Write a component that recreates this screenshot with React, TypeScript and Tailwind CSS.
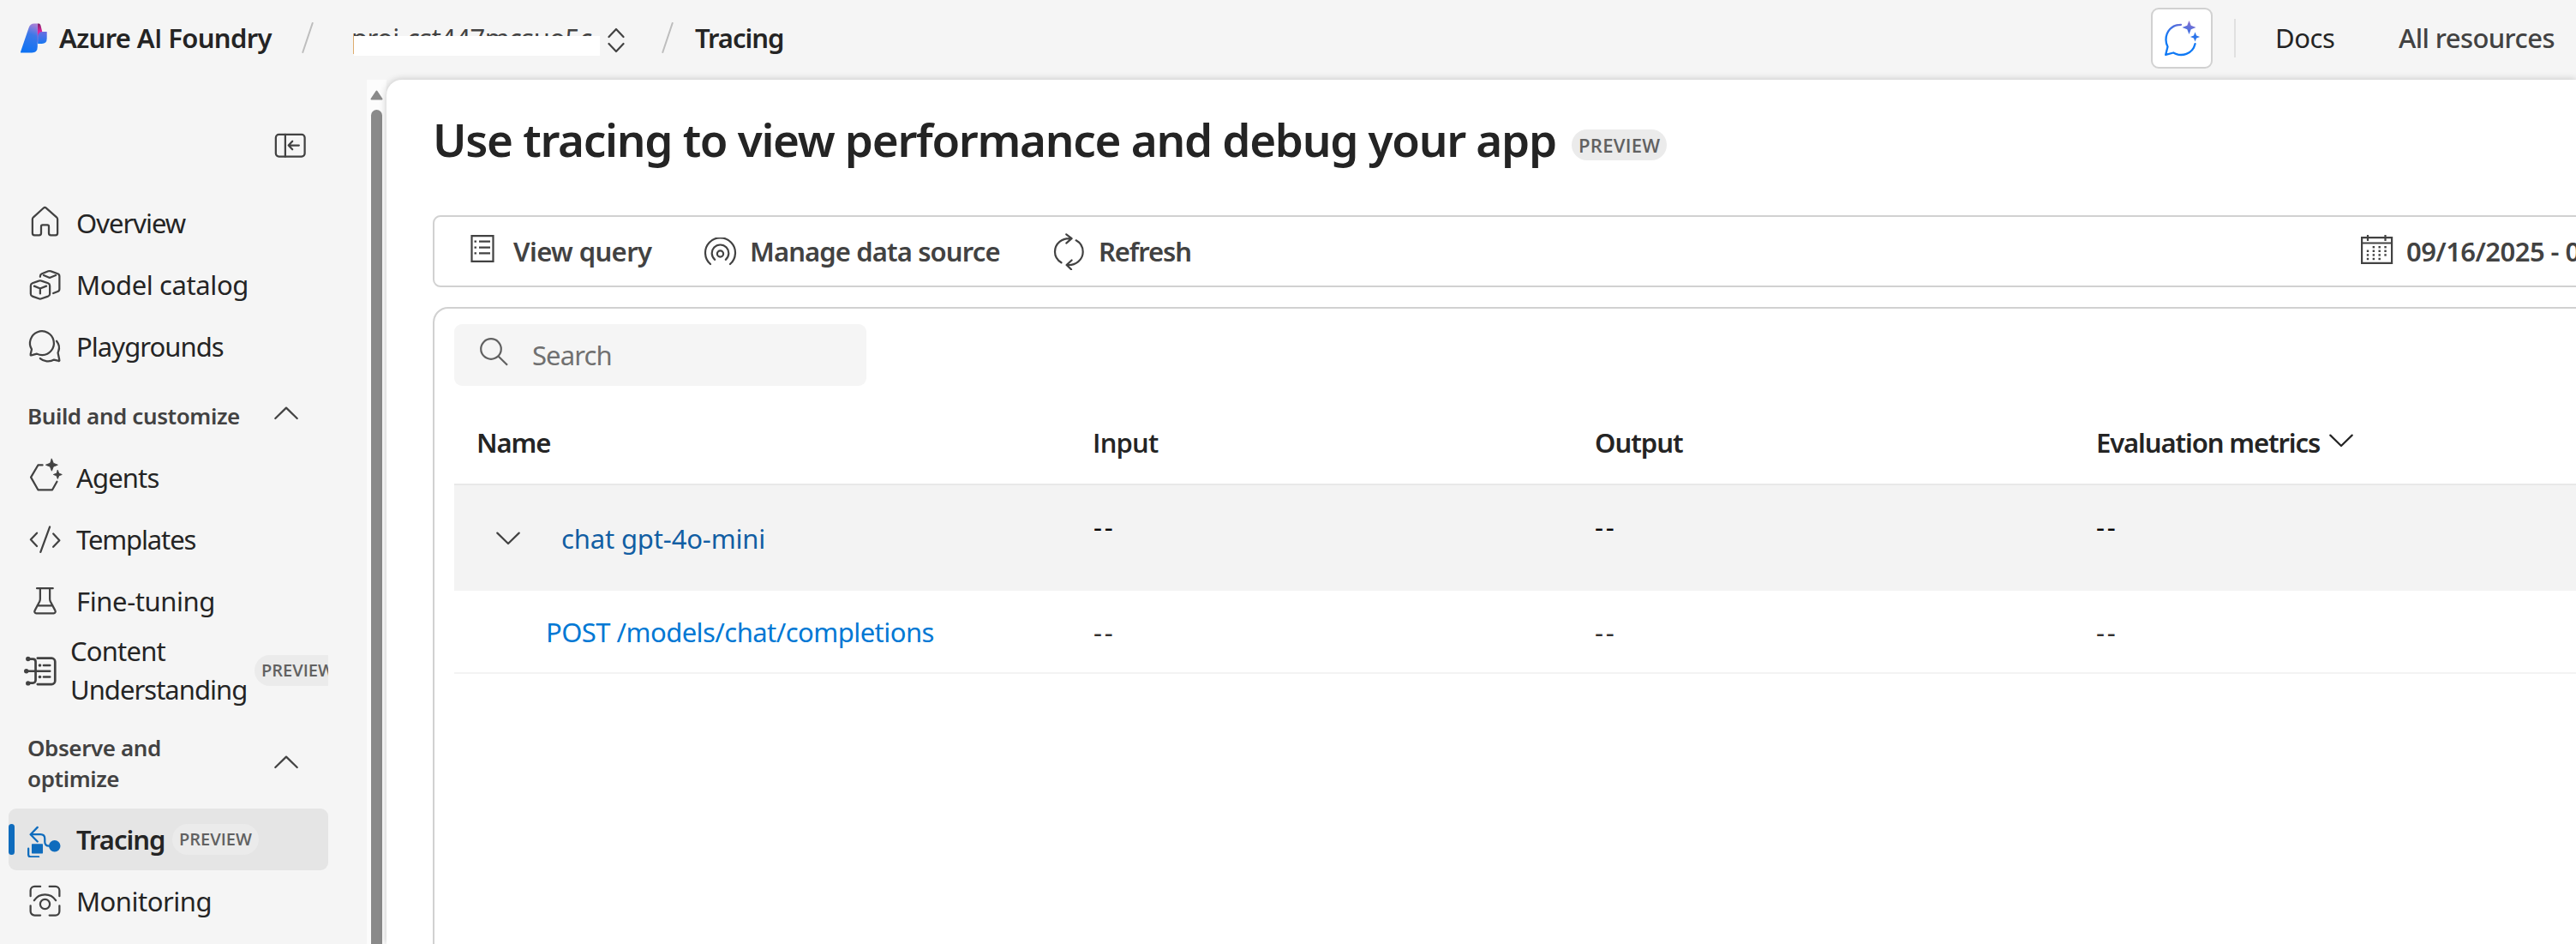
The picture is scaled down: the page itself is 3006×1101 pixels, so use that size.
import type { ReactNode } from "react";

const star = (cx: number, cy: number, r: number) => {
  const k = r * 0.28;
  return `M${cx} ${cy - r}L${cx + k} ${cy - k}L${cx + r} ${cy}L${cx + k} ${cy + k}L${cx} ${cy + r}L${cx - k} ${cy + k}L${cx - r} ${cy}L${cx - k} ${cy - k}Z`;
};

function Icon({ children }: { children: ReactNode }) {
  return (
    <svg viewBox="0 0 20 20" className="size-[45px] shrink-0" fill="none" stroke="currentColor" strokeWidth={1} strokeLinecap="round" strokeLinejoin="round">
      {children}
    </svg>
  );
}

const icons = {
  collapse: <><rect x="2.6" y="4.4" width="15" height="11.4" rx="1.6" /><path d="M7.5 4.4v11.4M14.6 10H9.4M11.2 7.9 9.2 10l2 2.1" /></>,
  home: <path d="M3.5 8.8c0-.4.2-.8.5-1.1l5.3-4.8a1 1 0 0 1 1.3 0L16 7.7c.3.3.5.7.5 1.1V16a1 1 0 0 1-1 1H13a1 1 0 0 1-1-1v-3.5a.75.75 0 0 0-.75-.75h-2.5a.75.75 0 0 0-.75.75V16a1 1 0 0 1-1 1H4.5a1 1 0 0 1-1-1z" />,
  cubes: <><path d="M2.6 11.2c0-.6.4-1.1.9-1.3l3.3-1.2c.5-.2.9-.2 1.4 0l3.4 1.2c.5.2.9.7.9 1.3v4.2c0 .6-.4 1.1-.9 1.3l-3.4 1.2c-.5.2-.9.2-1.4 0l-3.3-1.2a1.4 1.4 0 0 1-.9-1.3zM4.4 11.4l3.1 1.3 3.2-1.3M7.5 12.7v2.6" /><path d="M7.5 6.6v-.3c0-.6.4-1.1.9-1.3l3.3-1.3c.5-.2.9-.2 1.4 0L16.6 5c.6.2.9.7.9 1.3v6.6c0 .6-.3 1.1-.9 1.3l-2.3.9M9.3 5.8l3.1 1.3 3.2-1.3" /></>,
  chat: <><path d="M3.1 12.2A6.2 6.2 0 1 1 8.6 15.2c-1.1 0-1.9-.2-2.8-.7l-2.9.8c-.3.1-.5-.2-.4-.5z" /><path d="M16 7.9c1.1 1.4 1.7 3.4 1 5.2l-.3.9.8 3.8c.1.3-.2.5-.4.4l-2.4-.6c-2.4 1.3-5.3.9-7.2-.7" /></>,
  agents: <><path d="M8.7 4.2H6.4L2.7 10.5l3.7 6.5h7.4l2.4-4.2" /><path d={star(13.5, 4.1, 3.1)} fill="currentColor" strokeWidth={0.4} /><path d={star(16.6, 9.1, 2.2)} fill="currentColor" strokeWidth={0.4} /></>,
  code: <path d="M12.5 4.2 7.7 17.3M5.8 7.4l-3.2 3.4 3.2 3.4M14.3 7.8l3.2 3.4-3.2 3.4" />,
  flask: <path d="M5.8 4.1h8.3M7.5 4.2v5.4c0 .5-.1.9-.3 1.3l-2.5 4.7c-.4.7.1 1.4.8 1.4h9c.7 0 1.2-.7.8-1.4l-2.5-4.7c-.2-.4-.3-.8-.3-1.3V4.2M6 13h8" />,
  content: <><g strokeWidth={1.2}><path d="M3.9 3.8h2.5c.8 0 1.4.6 1.4 1.4v9.6c0 .8-.6 1.5-1.4 1.5H3.9M3 10.1h12.2M8.8 3.4h7.3c1 0 1.8.8 1.8 1.8v9.9c0 1-.8 1.8-1.8 1.8H8.8M12 7.1h3.2M12 13.1h3.2" /></g><g fill="currentColor" strokeWidth={0}><circle cx="3.9" cy="3.8" r="1.2" /><circle cx="3" cy="10.1" r="1.2" /><circle cx="3.9" cy="16.4" r="1.2" /><circle cx="10" cy="7.1" r=".8" /><circle cx="10" cy="13.1" r=".8" /></g></>,
  tracing: <><path d="M6.1 4.4 2.5 8.1l3.6 3.7M2.7 8.1h5c1.500 0 2.200.9 2.200 2.200v1.600c0 1.300.7 2.200 2.200 2.200h1M1.400 15.400v3.200c0 .7.4 1.100 1.100 1.100h4.200" /><rect x="3.1" y="13" width="5.8" height="5" rx=".3" fill="currentColor" strokeWidth={0} /><circle cx="15" cy="14.1" r="3" fill="currentColor" strokeWidth={0} /></>,
  monitor: <><path d="M2.5 8.1V5.200c0-1.200.9-2.100 2.100-2.100h3M12.300 3.100h3.100c1.200 0 2.100.9 2.100 2.100v2.900M17.500 13v2.900c0 1.200-.9 2.100-2.100 2.100h-3.100M7.600 18h-3c-1.200 0-2.100-.9-2.100-2.100V13M4.400 10.300c2.600-4.100 8.600-4.100 11.200 0" /><circle cx="10" cy="12.2" r="2.5" /></>,
};

function Chevron({ up = false, className = "" }: { up?: boolean; className?: string }) {
  return (
    <svg viewBox="0 0 28 16" className={`h-[16px] w-[28px] shrink-0 ${className}`} fill="none" stroke="currentColor" strokeWidth={2.2} strokeLinecap="round" strokeLinejoin="round">
      <path d={up ? "M1.3 14 14 1.6 26.7 14" : "M1.3 1.6 14 14 26.7 1.6"} />
    </svg>
  );
}

function Slash() {
  return (
    <svg viewBox="0 0 14 36" className="h-[36px] w-[14px] shrink-0" fill="none" stroke="#bdbdbd" strokeWidth={2} strokeLinecap="round">
      <path d="M12.7 1 1.3 35" />
    </svg>
  );
}

function Badge({ className = "" }: { className?: string }) {
  return (
    <span className={`flex h-[36px] shrink-0 items-center rounded-full bg-[#ebebeb] font-['Open_Sans'] font-semibold text-[#616161] ${className}`}>PREVIEW</span>
  );
}

function NavItem({ icon, label, tracking }: { icon: ReactNode; label: string; tracking: string }) {
  return (
    <a className="ml-[10px] flex h-[72px] w-[373px] items-center pl-[20px]">
      <span className="mb-[4px] mr-[14px] text-[#424242]"><Icon>{icon}</Icon></span>
      <span className={`whitespace-nowrap ${tracking}`}>{label}</span>
    </a>
  );
}

function Sidebar() {
  return (
    <aside className="flex h-[1008px] w-[428px] shrink-0 flex-col overflow-hidden">
      <div className="ml-[316px] mt-[54px] text-[#424242]"><Icon>{icons.collapse}</Icon></div>
      <nav className="mt-[32px] flex flex-col">
        <NavItem icon={icons.home} label="Overview" tracking="tracking-[-1px]" />
        <NavItem icon={icons.cubes} label="Model catalog" tracking="tracking-[-0.4px]" />
        <NavItem icon={icons.chat} label="Playgrounds" tracking="tracking-[-0.95px]" />
        <div className="ml-[32px] flex h-[81px] w-[316px] items-center justify-between pt-[8px] text-[26px] font-semibold text-[#424242]">
          <span className="whitespace-nowrap tracking-[-0.4px]">Build and customize</span>
          <Chevron up className="mb-[6px]" />
        </div>
        <NavItem icon={icons.agents} label="Agents" tracking="tracking-[-0.85px]" />
        <NavItem icon={icons.code} label="Templates" tracking="tracking-[-1.15px]" />
        <NavItem icon={icons.flask} label="Fine-tuning" tracking="tracking-[-0.4px]" />
        <a className="ml-[10px] flex h-[90px] w-[373px] items-center overflow-hidden pl-[14px]">
          <span className="mr-[13px] text-[#424242]"><Icon>{icons.content}</Icon></span>
          <span className="w-[215px] shrink-0 whitespace-nowrap leading-[45px]">
            <span className="block tracking-[-0.8px]">Content</span>
            <span className="block tracking-[-0.98px]">Understanding</span>
          </span>
          <Badge className="px-[8px] text-[20px]" />
        </a>
        <div className="ml-[32px] mt-[27px] flex w-[316px] items-center justify-between text-[26px] font-semibold leading-[36px] text-[#424242]">
          <span className="tracking-[-0.4px]">Observe and<br />optimize</span>
          <Chevron up className="mb-[3px]" />
        </div>
        <a className="ml-[10px] mt-[17px] flex h-[72px] w-[373px] items-center rounded-[9px] bg-[#e5e5e5]">
          <span className="h-[36px] w-[7px] rounded-full bg-[#0f6cbd]" />
          <span className="mb-[4px] ml-[13px] mr-[14px] text-[#0f6cbd]"><Icon>{icons.tracing}</Icon></span>
          <span className="w-[112px] whitespace-nowrap font-semibold tracking-[-1.03px]">Tracing</span>
          <Badge className="px-[8px] text-[20px]" />
        </a>
        <NavItem icon={icons.monitor} label="Monitoring" tracking="tracking-[-0.5px]" />
      </nav>
    </aside>
  );
}

function Header() {
  return (
    <header className="flex h-[93px] shrink-0 items-center bg-[#f5f5f5] pb-[5px]">
      <svg viewBox="72 78 94 105" className="ml-[24px] h-[35px] w-[31px] shrink-0">
        <defs>
          <linearGradient id="la" x1=".6" y1="0" x2=".4" y2="1"><stop offset="0" stopColor="#a27fd8" /><stop offset=".35" stopColor="#3c78e8" /><stop offset="1" stopColor="#0d72f3" /></linearGradient>
          <linearGradient id="lb" x1="0" y1="0" x2="0" y2="1"><stop offset="0" stopColor="#7a1f66" /><stop offset=".4" stopColor="#e0249a" /><stop offset="1" stopColor="#e83aa8" /></linearGradient>
          <linearGradient id="lc" x1="0" y1="0" x2="0" y2="1"><stop offset="0" stopColor="#6a6ee0" /><stop offset="1" stopColor="#1677f2" /></linearGradient>
        </defs>
        <path d="M132 79h5q4 0 6 6l6 24q-16 6-16 22v18l-3-8z" fill="url(#lb)" />
        <path d="M165 108v24q0 18-18 18h-14v-24q0-18 18-18z" fill="url(#lc)" />
        <path d="M132 79v82q0 21-20 21H74q-3 0-2-3l29-85q5-15 19-15z" fill="url(#la)" />
      </svg>
      <span className="ml-[14px] w-[283px] whitespace-nowrap font-semibold tracking-[-0.65px]">Azure A<span className="font-['Open_Sans']">I</span> Foundry</span>
      <Slash />
      <span className="relative ml-[44px] w-[290px] whitespace-nowrap tracking-[-0.58px] text-[#424242]">
        proj-cst447mcsuo5c
        <span className="absolute left-[3px] top-[20px] h-[23px] w-[287px] bg-white" />
      </span>
      <svg viewBox="0 0 20 30" className="ml-[9px] mt-[6px] h-[30px] w-[20px] shrink-0" fill="none" stroke="#424242" strokeWidth={2.2} strokeLinecap="round" strokeLinejoin="round">
        <path d="M1.5 11 10 2l8.500 9M1.500 19l8.500 9 8.500-9" />
      </svg>
      <span className="ml-[43px] flex"><Slash /></span>
      <span className="ml-[25px] whitespace-nowrap font-semibold tracking-[-1.03px]">Tracing</span>
      <span className="ml-auto flex h-[71px] w-[72px] shrink-0 items-center justify-center rounded-[9px] border-2 border-[#d1d1d1] bg-white">
        <svg viewBox="2526 19 44 44" className="size-[44px]" fill="none">
          <defs><linearGradient id="chat" gradientUnits="userSpaceOnUse" x1="2560" y1="20" x2="2552" y2="46"><stop offset="0" stopColor="#9a70c8" /><stop offset=".5" stopColor="#4a6fe0" /><stop offset="1" stopColor="#0f79f5" /></linearGradient></defs>
          <path d="M2547 25.800C2536 25.800 2529.500 34 2529.500 43.500c0 3 .7 5.500 2 8l-2.300 9.300 9-2.300c9.500 5.500 22.500 1.500 25.300-10.300" stroke="url(#chat)" strokeWidth={2.300} strokeLinecap="round" strokeLinejoin="round" />
          <path d={star(2556.5, 29, 8)} fill="url(#chat)" />
          <path d={star(2563.5, 40, 5.6)} fill="#2a74ea" />
        </svg>
      </span>
      <span className="ml-[25px] h-[45px] w-[2px] shrink-0 bg-[#e0e0e0]" />
      <span className="ml-[46px] w-[144px] shrink-0 tracking-[-0.4px]">Docs</span>
      <span className="w-[207px] shrink-0 whitespace-nowrap font-medium tracking-[-0.58px] text-[#424242]">All resources</span>
    </header>
  );
}

const dots = [[1, 2, 3], [0, 1, 2, 3], [0, 1, 2, 3], [0, 1, 2]];

function Toolbar() {
  return (
    <div className="ml-[54px] mt-[58px] flex h-[84px] w-[2700px] shrink-0 items-center rounded-[9px] border-2 border-[#d1d1d1] font-semibold text-[#424242]">
      <svg viewBox="549 274 28 32" className="mb-[6px] ml-[42px] h-[32px] w-[28px] shrink-0" fill="none" stroke="currentColor" strokeWidth={2.200}>
        <path d="M550.500 275.200h25v29.600h-25zM559 281.700h13M559 288.700h13M559 295.300h13M553.500 281.700h2.500M553.500 288.700h2.500M553.500 295.300h2.500" />
      </svg>
      <span className="ml-[22px] w-[222px] shrink-0 whitespace-nowrap tracking-[-0.6px]">View query</span>
      <svg viewBox="821 275 39 33" className="h-[33px] w-[39px] shrink-0" fill="none" stroke="currentColor" strokeWidth={2.200} strokeLinecap="round">
        <circle cx="840.500" cy="294" r="3.600" />
        <path d="M834.200 300.800A9.800 9.800 0 1 1 846.800 300.800M829 306A17.500 17.500 0 1 1 852 306" />
      </svg>
      <span className="ml-[15px] w-[354px] shrink-0 whitespace-nowrap tracking-[-0.88px]">Manage data source</span>
      <svg viewBox="1229 271 37 43" className="h-[43px] w-[37px] shrink-0" fill="none" stroke="currentColor" strokeWidth={2.200} strokeLinecap="round" strokeLinejoin="round">
        <path d="M1244.300 272.300l6.300 4.900-6.300 5.400M1250.300 277.200c-11-1.300-19.300 6-19.300 15.500 0 5 3 9.800 7.500 12.600M1250.600 302.500l-6 5.500 5.500 5.300M1245 308c10.500 1 18.700-6.300 18.700-15.300 0-5.400-3-10.600-8-13.400" />
      </svg>
      <span className="ml-[16px] w-[120px] shrink-0 whitespace-nowrap tracking-[-1.1px]">Refresh</span>
      <svg viewBox="2754 273 39 36" className="mb-[4px] ml-[1352px] h-[36px] w-[39px] shrink-0" fill="none" stroke="currentColor" strokeWidth={2.200}>
        <path d="M2756.100 277.200h35v29.600h-35zM2756 283.500h35M2763 274v7M2783.500 274v7" />
        {dots.map((cols, r) => cols.map((c) => <rect key={`${r}-${c}`} x={2761.8 + c * 6.85} y={287 + r * 4.6} width={2.4} height={2.4} fill="currentColor" strokeWidth={0} />))}
      </svg>
      <span className="ml-[15px] w-[198px] shrink-0 overflow-hidden whitespace-nowrap tracking-[-0.55px]">09/16/2025 - 0</span>
    </div>
  );
}

const columns = "grid grid-cols-[746px_585px_585px_700px]";

function TracePanel() {
  return (
    <section className="ml-[54px] mt-[23px] h-[800px] w-[2700px] shrink-0 rounded-[18px] border-2 border-[#d1d1d1] px-[23px] pt-[18px]">
      <div className="flex h-[72px] w-[481px] items-center rounded-[9px] bg-[#f5f5f5] text-[#707070]">
        <svg viewBox="560 393 33 34" className="mb-[8px] ml-[30px] h-[34px] w-[33px] shrink-0" fill="none" stroke="#616161" strokeWidth={2.200}>
          <circle cx="573" cy="407" r="11.800" />
          <path d="M581.500 415.500 592 425.700" />
        </svg>
        <span className="ml-[28px] tracking-[-0.9px]">Search</span>
      </div>
      <div className="mt-[18px] border-b-2 border-[#e8e8e8]">
        <div className={`${columns} h-[96px] items-center font-semibold`}>
          <span className="pl-[26px] tracking-[-1.1px]">Name</span>
          <span className="-ml-px font-['Open_Sans'] tracking-[-0.8px]">Input</span>
          <span className="tracking-[-1px]">Output</span>
          <span className="flex items-center whitespace-nowrap tracking-[-1.1px]"><span className="w-[272px]">Evaluation metrics</span><Chevron className="mb-[5px]" /></span>
        </div>
      </div>
      <div className={`${columns} h-[123px] items-center bg-[#f3f3f3]`}>
        <span className="flex items-center pl-[49px]">
          <Chevron className="text-[#424242]" />
          <span className="ml-[48px] tracking-[-0.15px] text-[#115ea3]">chat gpt-4o-mini</span>
        </span>
        {[0, 1, 2].map((i) => <span key={i} className="mb-[28px] tracking-[2.7px] text-black">--</span>)}
      </div>
      <div className={`${columns} h-[97px] items-center border-b-2 border-[#f3f3f3]`}>
        <span className="pl-[107px] tracking-[-0.55px] text-[#0078d4]">POST /models/chat/completions</span>
        {[0, 1, 2].map((i) => <span key={i} className="tracking-[2.7px] text-[#323130]">--</span>)}
      </div>
    </section>
  );
}

export default function App() {
  return (
    <div className="flex h-[1101px] w-[3006px] flex-col overflow-hidden bg-[#f5f5f5] font-['Noto_Sans','Open_Sans',sans-serif] text-[31px] leading-[44px] text-[#242424]">
      <Header />
      <div className="flex h-[1008px]">
        <Sidebar />
        <div className="flex w-[23px] shrink-0 flex-col items-center bg-[#fcfcfc] pt-[12px]">
          <svg viewBox="0 0 15 12" className="h-[12px] w-[15px] shrink-0" fill="#8a8a8a" stroke="#8a8a8a" strokeWidth={2} strokeLinejoin="round"><path d="M7.500 1.500 13.500 10.500h-12z" /></svg>
          <span className="mt-[11px] h-[973px] w-[13px] shrink-0 rounded-t-full bg-[#8a8a8a]" />
        </div>
        <main className="relative flex h-[1008px] w-[2555px] shrink-0 flex-col overflow-hidden rounded-tl-[18px] bg-white shadow-[0_0_9px_rgba(0,0,0,0.22)]">
          <div className="flex h-[100px] shrink-0 items-end pl-[54px]">
            <h1 className="w-[1329px] shrink-0 whitespace-nowrap text-[53px] font-semibold leading-[60px] tracking-[-1.31px]">Use tracing to view performance and debug your app</h1>
            <Badge className="mb-[6px] px-[8px] text-[22px] tracking-[0.3px]" />
          </div>
          <Toolbar />
          <TracePanel />
        </main>
      </div>
    </div>
  );
}
